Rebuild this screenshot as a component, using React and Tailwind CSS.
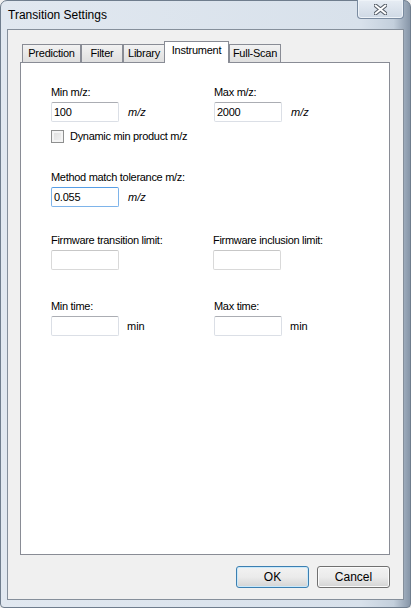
import React from 'react';

const FONT = "font-['Liberation_Sans',Arial,sans-serif]";

function TextBox({ value, focused, disabled }) {
  const border = focused
    ? 'border-[#7eb4ea] border-t-[#569de5]'
    : disabled
    ? 'border-[#d9d9d9] border-t-[#c7c7c7]'
    : 'border-[#dbdfe6] border-t-[#abadb3]';
  return (
    <div className={`w-[68px] h-[20px] bg-white border rounded-[2px] ${border} flex items-center pl-[2px] text-[11px] tracking-[-0.25px] leading-none text-black`}>
      {value}
    </div>
  );
}

function Label({ children }) {
  return <div className="h-[13px] leading-[13px] text-[11px] tracking-[-0.3px] text-black whitespace-nowrap">{children}</div>;
}

function Field({ label, value, unit, unitItalic, focused, disabled }) {
  return (
    <div className="flex flex-col gap-[3px]">
      <Label>{label}</Label>
      <div className="flex items-center">
        <TextBox value={value} focused={focused} disabled={disabled} />
        {unit && (
          <span className={`text-[11px] leading-none ${unitItalic ? 'italic ml-[9px]' : 'ml-[8px]'}`}>{unit}</span>
        )}
      </div>
    </div>
  );
}

function Tab({ children, w }) {
  return (
    <div
      className={`h-[18px] ${w} border border-b-0 border-[#898c95] bg-gradient-to-b from-[#f2f2f2] to-[#dfdfdf] flex items-center justify-center text-[11px] tracking-[-0.25px] leading-none text-black`}
    >
      {children}
    </div>
  );
}

function Button({ children, primary }) {
  return (
    <div
      className={`w-[73px] h-[22px] rounded-[3px] border ${primary ? 'border-[#3c7fb1] shadow-[inset_0_0_0_1px_#c9e9fb]' : 'border-[#707070] shadow-[inset_0_0_0_1px_#fbfbfb]'} bg-gradient-to-b from-[#f2f2f2] via-[#ebebeb] to-[#d4d4d4] flex items-center justify-center text-[12px] leading-none text-black`}
    >
      {children}
    </div>
  );
}

export default function App() {
  return (
    <div className={`w-[411px] h-[608px] ${FONT} bg-[#f0f0f0]`}>
      <div className="w-full h-full flex flex-col rounded-t-[7px] rounded-b-[4px] border border-[#6f7d8d] bg-[linear-gradient(to_right,#e1e8f0_0%,#d8e1eb_88%,#c3cfdc_96%,#8796a8_100%)]">
        {/* title bar */}
        <div className="h-[28px] flex items-start justify-between pl-[7px] pr-[6px]">
          <span className="mt-[7px] text-[12px] leading-[15px] text-black">Transition Settings</span>
          <div className="w-[47px] h-[19px] -mt-px rounded-b-[4px] border border-t-0 border-[#7a8ba0] bg-gradient-to-b from-[#e7edf4] to-[#cfd9e5] shadow-[inset_0_0_0_1px_#eef3f8] flex items-center justify-center">
            <svg width="13" height="11" viewBox="0 0 13 11">
              <path d="M1.5 1.5 L11.5 9.5 M11.5 1.5 L1.5 9.5" stroke="#545c66" strokeWidth="4" strokeLinecap="round" />
              <path d="M1.5 1.5 L11.5 9.5 M11.5 1.5 L1.5 9.5" stroke="#ffffff" strokeWidth="2" strokeLinecap="round" />
            </svg>
          </div>
        </div>
        {/* client */}
        <div className="flex-1 mx-[6px] mb-[7px] border border-[#858f9b] bg-[#f0f0f0] flex flex-col pl-[12px] pr-[13px] pt-[11px]">
          <div className="flex items-end h-[21px] relative z-10 pl-[2px]">
            <Tab w="w-[59px]">Prediction</Tab>
            <Tab w="w-[42px]">Filter</Tab>
            <Tab w="w-[42px]">Library</Tab>
            <div className="h-[22px] w-[65px] -ml-px -mb-px border border-b-0 border-[#898c95] bg-white flex items-start justify-center pt-[3px] text-[11px] tracking-[-0.25px] leading-none text-black">
              Instrument
            </div>
            <Tab w="w-[52px]">Full-Scan</Tab>
          </div>
          <div className="h-[493px] border border-[#898c95] bg-white pl-[30px] pt-[23px]">
            <div className="grid grid-cols-[163px_163px]">
              <Field label="Min m/z:" value="100" unit="m/z" unitItalic />
              <Field label="Max m/z:" value="2000" unit="m/z" unitItalic />
            </div>
            <div className="flex items-center mt-[8px] h-[13px]">
              <div className="w-[13px] h-[13px] border border-[#8e8f8f] bg-gradient-to-br from-[#dcdcdc] to-[#f4f4f4] shadow-[inset_0_0_0_2px_#f4f4f4]" />
              <span className="ml-[6px] text-[11px] tracking-[-0.3px] leading-none">Dynamic min product m/z</span>
            </div>
            <div className="mt-[28px]">
              <Field label="Method match tolerance m/z:" value="0.055" unit="m/z" unitItalic focused />
            </div>
            <div className="grid grid-cols-[162px_163px] mt-[27px]">
              <Field label="Firmware transition limit:" disabled />
              <Field label="Firmware inclusion limit:" disabled />
            </div>
            <div className="grid grid-cols-[163px_163px] mt-[30px]">
              <Field label="Min time:" unit="min" />
              <Field label="Max time:" unit="min" />
            </div>
          </div>
          <div className="flex justify-end gap-[8px] mt-[11px]">
            <Button primary>OK</Button>
            <Button>Cancel</Button>
          </div>
        </div>
      </div>
    </div>
  );
}
